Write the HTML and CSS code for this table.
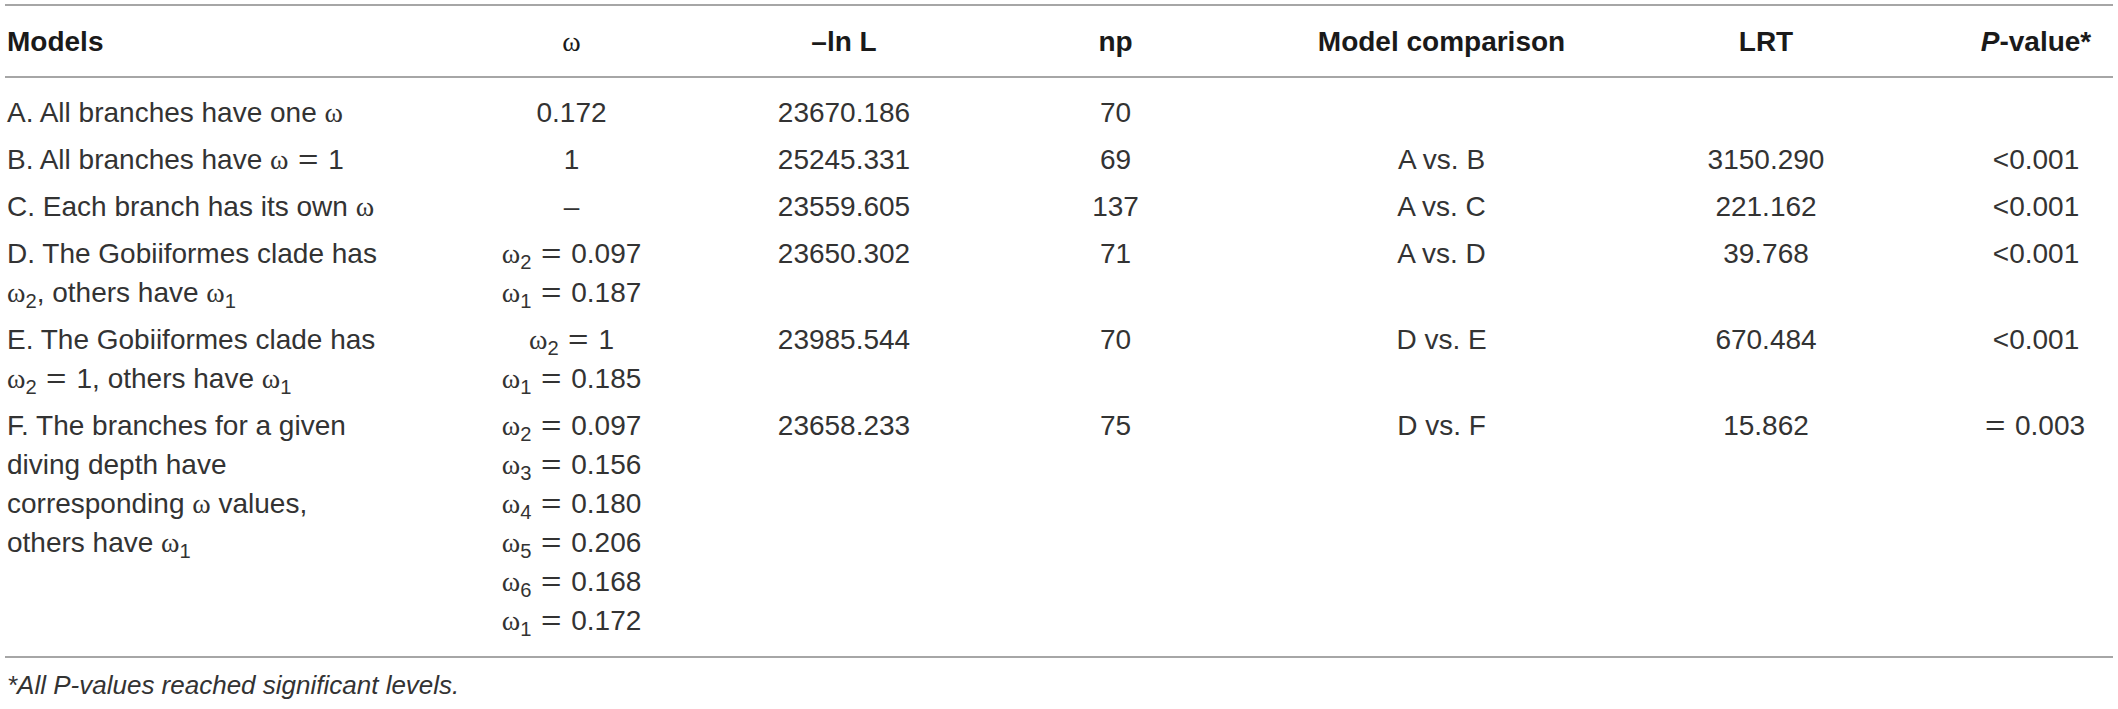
FILE: index.html
```html
<!DOCTYPE html>
<html lang="en">
<head>
<meta charset="utf-8">
<title>Model comparison table</title>
<link rel="stylesheet" href="styles.css">
</head>
<body>
<div class="page">
  <div class="tbl" role="table">
    <div class="row head" role="row">
      <div class="cell left" role="columnheader">Models</div>
      <div class="cell" role="columnheader"><span class="w">ω</span></div>
      <div class="cell" role="columnheader">–ln L</div>
      <div class="cell np" role="columnheader">np</div>
      <div class="cell" role="columnheader">Model comparison</div>
      <div class="cell lrt" role="columnheader">LRT</div>
      <div class="cell pv" role="columnheader"><i>P</i>-value*</div>
    </div>
    <div class="tbody">
      <div class="row" role="row">
        <div class="cell left">A. All branches have one <span class="w">ω</span></div>
        <div class="cell">0.172</div>
        <div class="cell">23670.186</div>
        <div class="cell np">70</div>
        <div class="cell"></div>
        <div class="cell lrt"></div>
        <div class="cell pv"></div>
      </div>
      <div class="row" role="row">
        <div class="cell left">B. All branches have <span class="w">ω</span><span class="eq">=</span>1</div>
        <div class="cell">1</div>
        <div class="cell">25245.331</div>
        <div class="cell np">69</div>
        <div class="cell">A vs. B</div>
        <div class="cell lrt">3150.290</div>
        <div class="cell pv">&lt;0.001</div>
      </div>
      <div class="row" role="row">
        <div class="cell left">C. Each branch has its own <span class="w">ω</span></div>
        <div class="cell">–</div>
        <div class="cell">23559.605</div>
        <div class="cell np">137</div>
        <div class="cell">A vs. C</div>
        <div class="cell lrt">221.162</div>
        <div class="cell pv">&lt;0.001</div>
      </div>
      <div class="row" role="row">
        <div class="cell left">D. The Gobiiformes clade has<br><span class="w">ω</span><sub>2</sub>, others have <span class="w">ω</span><sub>1</sub></div>
        <div class="cell"><span class="w">ω</span><sub>2</sub><span class="eq">=</span>0.097<br><span class="w">ω</span><sub>1</sub><span class="eq">=</span>0.187</div>
        <div class="cell">23650.302</div>
        <div class="cell np">71</div>
        <div class="cell">A vs. D</div>
        <div class="cell lrt">39.768</div>
        <div class="cell pv">&lt;0.001</div>
      </div>
      <div class="row" role="row">
        <div class="cell left">E. The Gobiiformes clade has<br><span class="w">ω</span><sub>2</sub><span class="eq">=</span>1, others have <span class="w">ω</span><sub>1</sub></div>
        <div class="cell"><span class="w">ω</span><sub>2</sub><span class="eq">=</span>1<br><span class="w">ω</span><sub>1</sub><span class="eq">=</span>0.185</div>
        <div class="cell">23985.544</div>
        <div class="cell np">70</div>
        <div class="cell">D vs. E</div>
        <div class="cell lrt">670.484</div>
        <div class="cell pv">&lt;0.001</div>
      </div>
      <div class="row" role="row">
        <div class="cell left">F. The branches for a given<br>diving depth have<br>corresponding <span class="w">ω</span> values,<br>others have <span class="w">ω</span><sub>1</sub></div>
        <div class="cell"><span class="w">ω</span><sub>2</sub><span class="eq">=</span>0.097<br><span class="w">ω</span><sub>3</sub><span class="eq">=</span>0.156<br><span class="w">ω</span><sub>4</sub><span class="eq">=</span>0.180<br><span class="w">ω</span><sub>5</sub><span class="eq">=</span>0.206<br><span class="w">ω</span><sub>6</sub><span class="eq">=</span>0.168<br><span class="w">ω</span><sub>1</sub><span class="eq">=</span>0.172</div>
        <div class="cell">23658.233</div>
        <div class="cell np">75</div>
        <div class="cell">D vs. F</div>
        <div class="cell lrt">15.862</div>
        <div class="cell pv"><span class="eq lead">=</span>0.003</div>
      </div>
    </div>
  </div>
  <p class="note">*All P-values reached significant levels.</p>
</div>
</body>
</html>
```

FILE: styles.css
```css
html, body {
  margin: 0;
  padding: 0;
  background: #ffffff;
}

.page {
  padding: 4px 5px 0 5px;
  font-family: "Liberation Sans", Arial, Helvetica, sans-serif;
  font-size: 28px;
  line-height: 39px;
  color: #333333;
}

.tbl {
  width: 2108px;
  border-top: 2px solid #a6a6a6;
  border-bottom: 2px solid #a6a6a6;
}

.row {
  display: grid;
  grid-template-columns: 430px 273px 272px 299px 325px 297px 212px;
  padding: 4px 0;
}

.head {
  padding: 15.5px 0;
  border-bottom: 2px solid #a6a6a6;
  font-weight: bold;
  color: #1a1a1a;
}

.tbody {
  padding: 11px 0 12px 0;
}

.cell {
  text-align: center;
  white-space: nowrap;
}

.cell.left {
  text-align: left;
  padding-left: 2px;
}

.cell.np {
  padding-right: 28px;
}

.cell.lrt {
  padding-left: 27px;
}

.cell.pv {
  padding-left: 58px;
}

.w {
  font-family: "Liberation Serif", "Times New Roman", serif;
  font-weight: normal;
}

.eq {
  display: inline-block;
  margin: 0 0.42em;
  transform: scaleX(1.25);
}

.eq.lead {
  margin-left: 0;
}

sub {
  font-size: 0.72em;
  line-height: 0;
  vertical-align: -0.28em;
}

.note {
  margin: 8px 0 0 0;
  padding-left: 2px;
  font-style: italic;
  font-size: 26px;
  line-height: 39px;
}
```
